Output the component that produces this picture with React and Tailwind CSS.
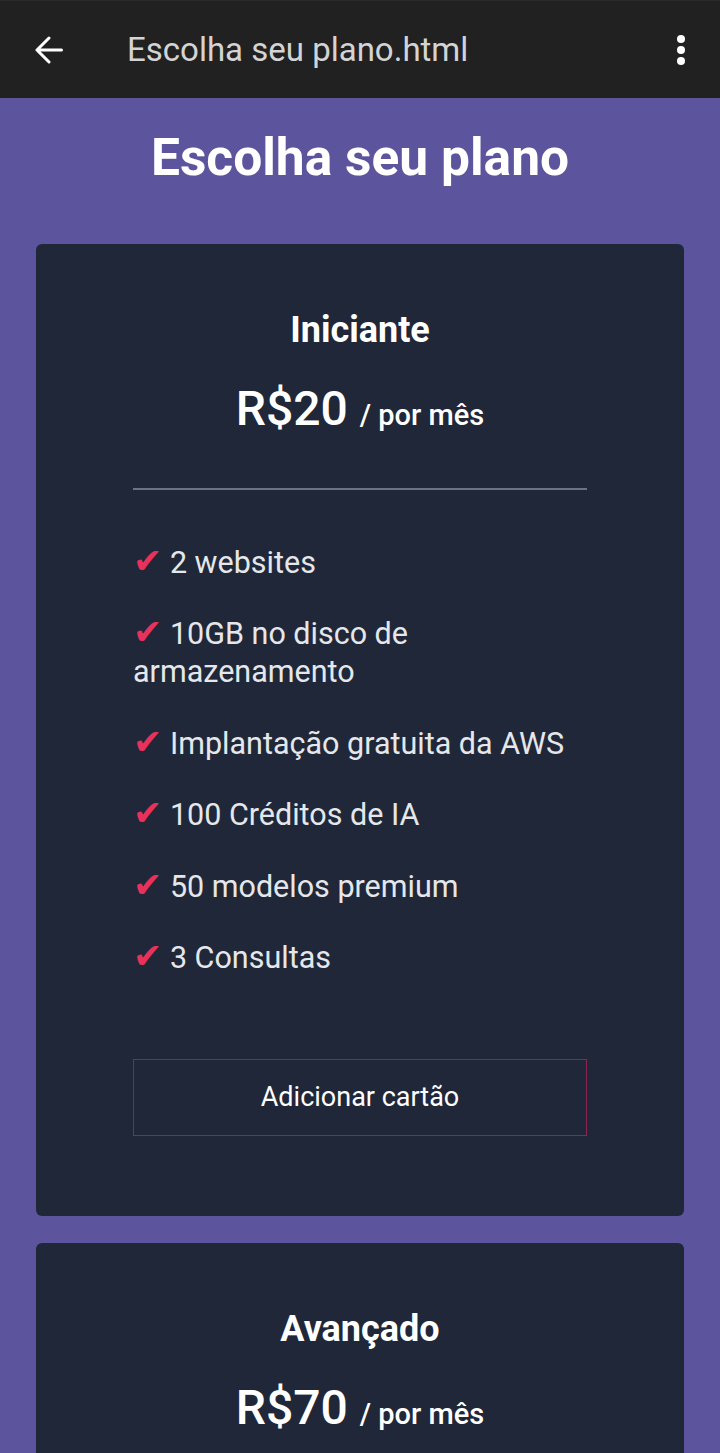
import React from "react";

const plans = [
  {
    name: "Iniciante",
    price: "R$20",
    features: [
      "2 websites",
      "10GB no disco de armazenamento",
      "Implantação gratuita da AWS",
      "100 Créditos de IA",
      "50 modelos premium",
      "3 Consultas",
    ],
  },
  {
    name: "Avançado",
    price: "R$70",
    features: [
      "5 websites",
      "50GB no disco de armazenamento",
      "Implantação gratuita da AWS",
      "500 Créditos de IA",
      "200 modelos premium",
      "10 Consultas",
    ],
  },
];

function Card({ plan }) {
  return (
    <div className="bg-[#1f2739] rounded-md px-[97px] pt-[61px] pb-[80px] flex flex-col">
      <h2 className="text-center text-white font-bold text-[36px] leading-[50px]">{plan.name}</h2>
      <div className="text-center text-white mt-[24px] flex items-baseline justify-center gap-[12px]">
        <span className="text-[48px] font-medium leading-[60px]">{plan.price}</span>
        <span className="text-[29px] font-medium">/ por mês</span>
      </div>
      <div className="h-[2px] bg-[#6b7280] mt-[49px]" />
      <ul className="mt-[54px] flex flex-col gap-[33.4px] text-[30.5px] leading-[38px] text-[#e5e7eb]">
        {plan.features.map((f) => (
          <li key={f}>
            <span className="text-[#e8315b] text-[35px] leading-none font-['DejaVu_Sans',sans-serif]">✔</span> {f}
          </li>
        ))}
      </ul>
      <div className="mt-[82px] h-[77px] border border-solid border-[#8e2450] text-white text-[27px] flex items-center justify-center">
        Adicionar cartão
      </div>
    </div>
  );
}

export default function App() {
  return (
    <div className="min-h-[1453px] bg-[#5d549e] font-['Roboto',sans-serif]">
      <div className="h-[98px] bg-[#212121] border-t border-[#2a2a2a] flex items-center pl-[35px] pr-[35px]">
        <svg width="28" height="28" viewBox="0 0 28 28" fill="none" stroke="#fff" strokeWidth="3" strokeLinecap="round" strokeLinejoin="round">
          <path d="M26.5 14H2M14 2L2 14l12 12" />
        </svg>
        <div className="ml-[64px] text-[33px] text-[#d4d4d4] flex-1">Escolha seu plano.html</div>
        <svg width="8" height="30" viewBox="0 0 8 30" fill="#fff">
          <circle cx="4" cy="4" r="4" />
          <circle cx="4" cy="15" r="4" />
          <circle cx="4" cy="26" r="4" />
        </svg>
      </div>
      <h1 className="text-center text-white font-bold text-[51.5px] leading-[60px] mt-[30px]">Escolha seu plano</h1>
      <div className="px-[36px] mt-[56px] flex flex-col gap-[27px] pb-[40px]">
        {plans.map((p) => (
          <Card key={p.name} plan={p} />
        ))}
      </div>
    </div>
  );
}
